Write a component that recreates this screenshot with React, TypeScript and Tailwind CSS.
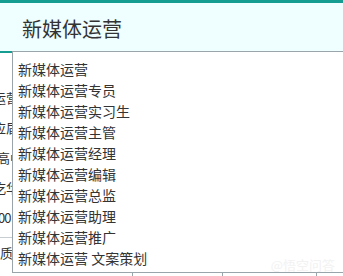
const items = [
  "新媒体运营",
  "新媒体运营专员",
  "新媒体运营实习生",
  "新媒体运营主管",
  "新媒体运营经理",
  "新媒体运营编辑",
  "新媒体运营总监",
  "新媒体运营助理",
  "新媒体运营推广",
  "新媒体运营 文案策划",
];

export default function App() {
  return (
    <div
      className="w-[343px] h-[276px] overflow-hidden bg-white text-[#333] flex flex-col"
      style={{ fontFamily: '"Noto Sans CJK SC", "Noto Sans", sans-serif' }}
    >
      {/* top accent */}
      <div className="h-[3px] bg-[#159d92]" />
      {/* header */}
      <div className="h-[48px] bg-[#effefe] flex items-center pl-[22px] pt-[4px]">
        <span className="text-[20px] leading-none">新媒体运营</span>
      </div>

      <div className="flex flex-1">
        {/* sheet fragments on the left */}
        <div className="w-[12px] shrink-0 flex flex-col overflow-hidden text-[13px] leading-none">
          <div className="h-[2px] bg-[#159d92]" />
          <div className="flex flex-col pt-[38px] gap-[17px] whitespace-nowrap">
            <span className="-ml-[7px]">运营</span>
            <span className="-ml-[7px]">应届</span>
            <span className="-ml-[3px]">高中</span>
            <span className="-ml-[7px]">吃华</span>
            <span className="-ml-[2px] tracking-[-1px]">00</span>
          </div>
          <div className="mt-[13px] h-px bg-[#c8cdd2]" />
          <span className="mt-[8px]">质</span>
        </div>

        {/* dropdown */}
        <div className="flex-1 flex flex-col">
          <div className="border-l border-t border-b border-[#9aa4ab] h-[222px] pt-[6px] pl-[5px]">
            {items.map((t) => (
              <div key={t} className="h-[21px] flex items-center text-[14px] leading-none whitespace-nowrap">
                {t}
              </div>
            ))}
          </div>
          <div className="flex flex-1 relative">
            <div className="w-[121px] border-r border-[#9aa4ab]" />
            <div className="w-[90px] border-r border-[#9aa4ab]" />
            <div className="w-[94px] border-r border-[#9aa4ab]" />
            <span className="absolute right-[8px] -top-[18px] text-[13px] text-[#f2f2f2]">@悟空问答</span>
          </div>
        </div>
      </div>
    </div>
  );
}
